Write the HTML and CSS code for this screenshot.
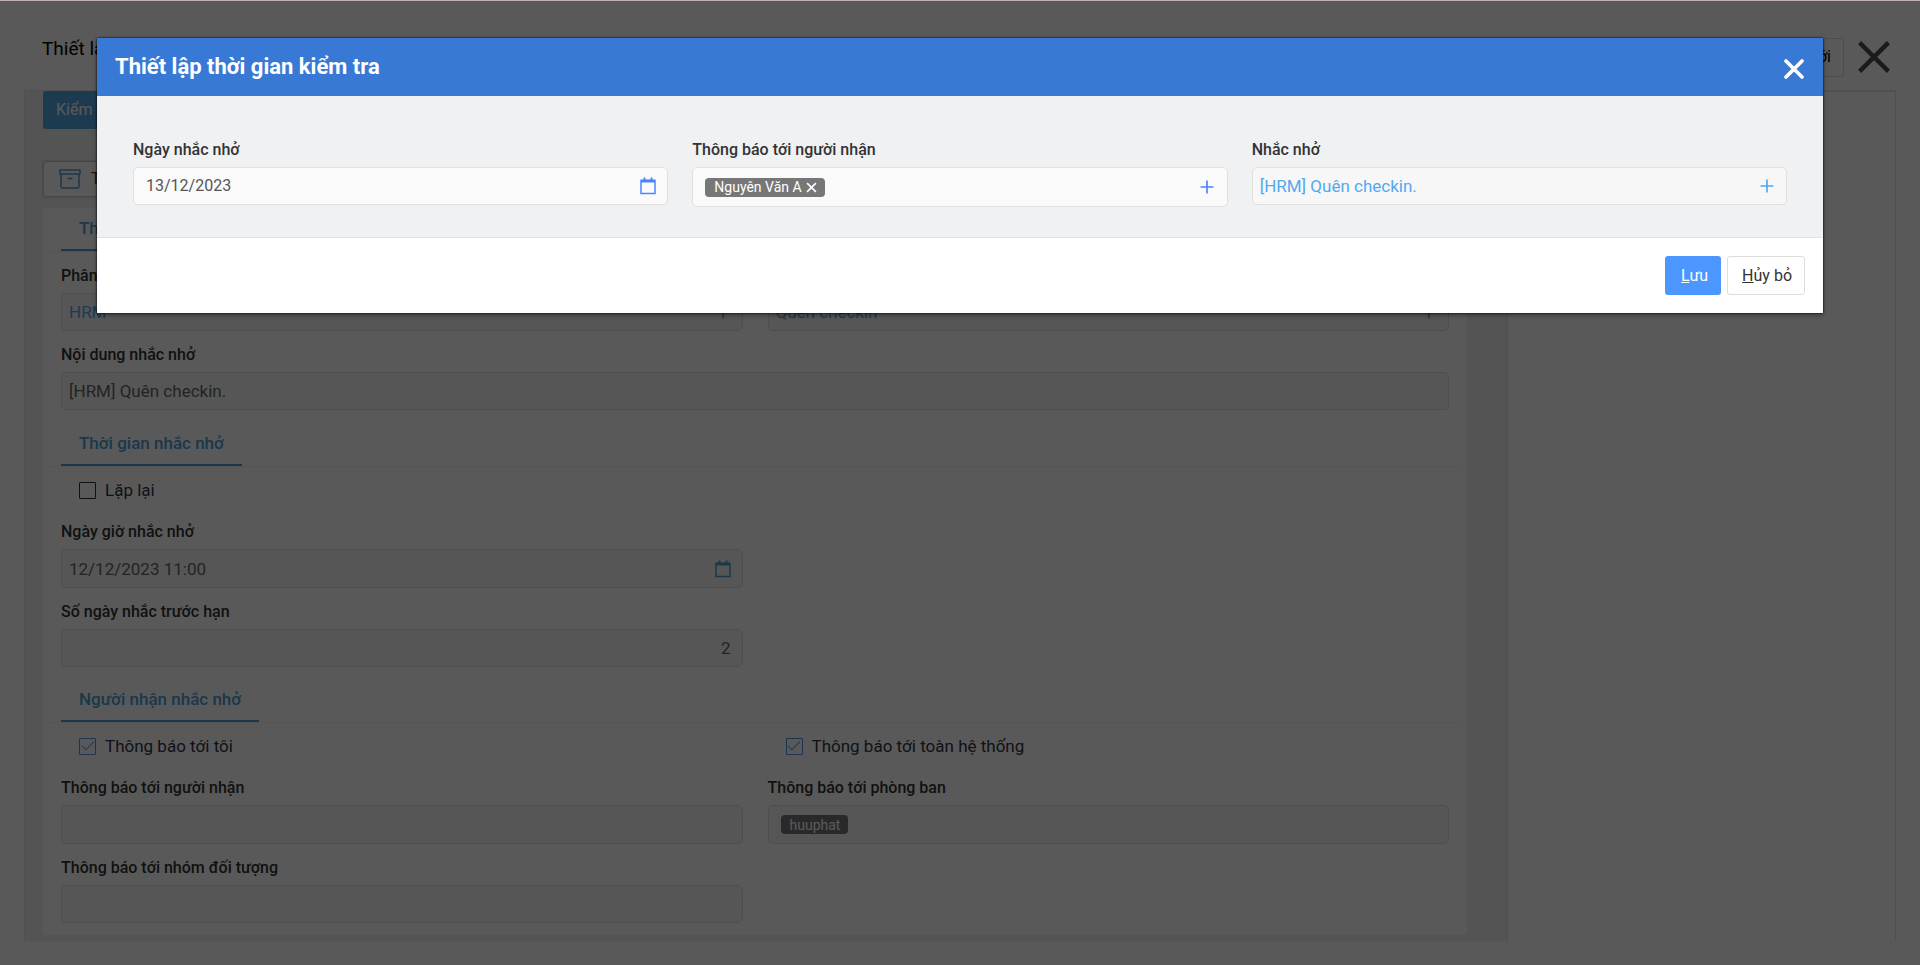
FILE: index.html
```html
<!DOCTYPE html>
<html lang="vi">
<head>
<meta charset="utf-8">
<title>Thiết lập nhắc nhở</title>
<link rel="stylesheet" href="styles.css">
</head>
<body>
<svg class="sprite" aria-hidden="true">
  <symbol id="plus" viewBox="0 0 14 14"><path d="M7 0.5v13M0.5 7h13" fill="none" stroke="currentColor" stroke-width="1.7"/></symbol>
  <symbol id="calendar" viewBox="0 0 16 18"><path d="M1 3.500h14v13H1z" fill="none" stroke="currentColor" stroke-width="1.500"/><path d="M1 2.500h14v3H1z" fill="currentColor"/><path d="M4.500 0.500v3M11.500 0.500v3" stroke="currentColor" stroke-width="1.800"/></symbol>
  <symbol id="cross" viewBox="0 0 20 20"><path d="M2 2l16 16M18 2L2 18" fill="none" stroke="currentColor" stroke-width="var(--cross)" stroke-linecap="var(--cap)"/></symbol>
  <symbol id="archive" viewBox="0 0 22 20"><path d="M1 1h20v4H1zM2 5v12.500a1.500 1.500 0 0 0 1.500 1.500h15a1.500 1.500 0 0 0 1.500-1.500V5M8.500 9.500h5" fill="none" stroke="currentColor" stroke-width="1.500" stroke-linejoin="round"/></symbol>
</svg>

<div class="page">
  <header class="topbar">
    <h1 class="page-title">Thiết lập nhắc nhở</h1>
    <div class="topbar-actions">
      <button class="btn btn-plain" type="button">Thêm mới</button>
      <button class="icon-btn page-close" type="button" aria-label="Đóng"><svg><use href="#cross"/></svg></button>
    </div>
  </header>
  <div class="workspace">
    <main class="main">
      <button class="btn btn-check" type="button">Kiểm tra</button>
      <div><button class="btn btn-template" type="button"><svg><use href="#archive"/></svg>Thiết lập</button></div>

      <section class="card">
        <div class="tabs"><h2 class="tab">Thông tin nhắc nhở</h2></div>
        <div class="grid">
          <div class="field">
            <label for="module">Phân hệ</label>
            <div class="control link"><input id="module" value="HRM"><svg class="plus"><use href="#plus"/></svg></div>
          </div>
          <div class="field">
            <label for="kind">Loại nhắc nhở</label>
            <div class="control link"><input id="kind" value="Quên checkin"><svg class="plus"><use href="#plus"/></svg></div>
          </div>
          <div class="field wide">
            <label for="content">Nội dung nhắc nhở</label>
            <div class="control"><input id="content" value="[HRM] Quên checkin."></div>
          </div>
        </div>
      </section>

      <section class="card">
        <div class="tabs"><h2 class="tab">Thời gian nhắc nhở</h2></div>
        <div class="grid">
          <label class="check wide"><input type="checkbox">Lặp lại</label>
          <div class="field">
            <label for="when">Ngày giờ nhắc nhở</label>
            <div class="control tall"><input id="when" value="12/12/2023 11:00"><svg class="cal"><use href="#calendar"/></svg></div>
          </div>
          <div class="field first">
            <label for="days">Số ngày nhắc trước hạn</label>
            <div class="control"><input id="days" class="number" value="2"></div>
          </div>
        </div>
      </section>

      <section class="card">
        <div class="tabs"><h2 class="tab">Người nhận nhắc nhở</h2></div>
        <div class="grid">
          <label class="check"><input type="checkbox" checked>Thông báo tới tôi</label>
          <label class="check"><input type="checkbox" checked>Thông báo tới toàn hệ thống</label>
          <div class="field">
            <label for="people">Thông báo tới người nhận</label>
            <div class="control tall"><input id="people"></div>
          </div>
          <div class="field">
            <label for="dept">Thông báo tới phòng ban</label>
            <div class="control tall tags"><span class="tag">huuphat</span><input id="dept"></div>
          </div>
          <div class="field">
            <label for="group">Thông báo tới nhóm đối tượng</label>
            <div class="control"><input id="group"></div>
          </div>
        </div>
      </section>
    </main>
    <aside class="side"></aside>
  </div>
</div>

<div class="overlay">
  <form class="modal" role="dialog" aria-labelledby="modal-title">
    <header class="modal-head">
      <h2 class="modal-title" id="modal-title">Thiết lập thời gian kiểm tra</h2>
      <button class="icon-btn modal-close" type="button" aria-label="Đóng"><svg><use href="#cross"/></svg></button>
    </header>
    <div class="modal-body">
      <div class="field">
        <label for="m-date">Ngày nhắc nhở</label>
        <div class="control light date"><input id="m-date" value="13/12/2023"><svg class="cal"><use href="#calendar"/></svg></div>
      </div>
      <div class="field">
        <label for="m-people">Thông báo tới người nhận</label>
        <div class="control light tags taller"><span class="tag">Nguyên Văn A<button class="icon-btn tag-x" type="button" aria-label="Xóa"><svg><use href="#cross"/></svg></button></span><input id="m-people"><svg class="plus"><use href="#plus"/></svg></div>
      </div>
      <div class="field">
        <label for="m-remind">Nhắc nhở</label>
        <div class="control link"><input id="m-remind" value="[HRM] Quên checkin."><svg class="plus"><use href="#plus"/></svg></div>
      </div>
    </div>
    <footer class="modal-foot">
      <button class="btn btn-save" type="submit"><span><u>L</u>ưu</span></button>
      <button class="btn btn-cancel" type="button"><span><u>H</u>ủy bỏ</span></button>
    </footer>
  </form>
</div>
</body>
</html>
```
FILE: styles.css
```css
* { box-sizing: border-box; }

body {
  margin: 0;
  background: #fff;
  color: #333;
  font: 16px/20px Roboto, sans-serif;
}

.sprite { position: absolute; width: 0; height: 0; }

h1, h2 { margin: 0; }

button, input { font: inherit; color: inherit; }

.page {
  display: flex;
  flex-direction: column;
  min-height: 100vh;
  padding: 0 24px 24px;
}

.topbar {
  display: flex;
  justify-content: space-between;
  align-items: center;
  height: 90px;
  padding: 0 4px 0 18px;
}

.page-title { color: #000; font-size: 19px; font-weight: 400; line-height: 24px; padding-top: 8px; }

.topbar-actions { display: flex; align-items: center; gap: 12px; padding-top: 24px; }

.btn {
  display: inline-flex;
  align-items: center;
  justify-content: center;
  height: 39px;
  border: 1px solid #ddd;
  border-radius: 3px;
  background: #fff;
}

.btn-plain { padding: 0 12px; color: #000; }

.icon-btn {
  --cap: butt;
  display: flex;
  padding: 0;
  border: 0;
  background: none;
}

.page-close { --cross: 2.4; color: #4d4d4d; }
.page-close svg { width: 36px; height: 36px; }

.workspace { display: flex; flex: 1; border-top: 1px solid #e4e4e4; }

.main {
  flex: 1;
  border-left: 1px solid #e4e4e4;
  background: #f1f1f1;
  padding: 0 40px 4px 18px;
}

.side {
  width: 389px;
  border: 1px solid #e4e4e4;
  border-width: 1px 1px 0;
}

.btn-check {
  height: 38px;
  padding: 0 13px;
  border: 0;
  background: #55a9e6;
  color: #fff;
}

.btn-template {
  gap: 10px;
  height: 36px;
  margin: 32px 0 11px;
  padding: 0 15px;
  border-color: #c8c8c8;
  color: #333;
  box-shadow: 0 0 3px rgba(0, 0, 0, .2);
}

.btn-template svg { width: 22px; height: 20px; color: #4f9fdb; }

.card { background: #fff; border-radius: 4px; padding: 0 6px 12px; }
.card:first-of-type { padding-bottom: 13px; }

.tabs { display: flex; height: 44px; padding: 0 12px; border-bottom: 1px solid #f1f1f1; }

.tab {
  height: 43px;
  padding: 10px 18px 0;
  border-bottom: 2px solid #4f9fdb;
  color: #4f9fdb;
  font-size: 17px;
  font-weight: 500;
  line-height: 20px;
}

.grid {
  display: grid;
  grid-template-columns: 1fr 1fr;
  column-gap: 25px;
  padding: 0 12px;
}

.wide { grid-column: 1 / -1; }
.first { grid-column: 1; }

.field { display: flex; flex-direction: column; padding-top: 14px; min-width: 0; }

.field > label {
  margin-bottom: 7px;
  color: #333;
  font-weight: 500;
}

.control {
  display: flex;
  align-items: center;
  height: 38px;
  padding: 0 11px 0 7px;
  border: 1px solid #e0e0e0;
  border-radius: 5px;
  background: #f7f7f7;
  color: #666;
  font-size: 17px;
}

.control.tall { height: 39px; }
.control.taller { height: 40px; }
.control.light { background: #fafafa; color: #555; }
.control.date { padding-left: 12px; font-size: 16px; }
.control.tags { padding: 0 13px 0 12px; }
.control.link { padding-right: 12px; color: #52a9f0; }

.control input {
  flex: 1;
  min-width: 0;
  padding: 0;
  border: 0;
  outline: 0;
  background: none;
}

.control svg { flex: none; color: #4a86ff; }
.control.link svg { color: #52a9f0; }
.page .control .cal { color: #4f9fdb; }
.page .number { text-align: right; }

.plus { width: 14px; height: 14px; }
.cal { width: 16px; height: 18px; }

.tag {
  display: inline-flex;
  align-items: center;
  gap: 4px;
  height: 19px;
  padding: 0 8px 0 9px;
  border-radius: 4px;
  background: #777;
  color: #fff;
  font-size: 14px;
}

.control .tag-x { --cross: 3; }
.control .tag-x svg { width: 11px; height: 11px; color: #fff; }

.check {
  display: flex;
  align-items: center;
  gap: 9px;
  padding: 13px 0 8px 18px;
  color: #333346;
  font-size: 17px;
  line-height: 20px;
}

.check input {
  appearance: none;
  display: grid;
  place-items: center;
  width: 17px;
  height: 17px;
  margin: 0;
  border: 1px solid #333;
  border-radius: 1px;
}

.check input:checked { border-color: #5595e8; }

.check input:checked::before {
  content: "";
  width: 11px;
  height: 5px;
  margin-bottom: 4px;
  border: solid #5595e8;
  border-width: 0 0 1px 1px;
  transform: rotate(-45deg);
}

.overlay {
  position: fixed;
  inset: 0;
  padding: 37px 97px;
  border-top: 1px solid #bbb0ac;
  background: rgba(0, 0, 0, .65);
}

.modal {
  background: #fff;
  box-shadow: 0 0 2px #000, 0 2px 5px rgba(0, 0, 0, .4);
}

.modal-head {
  display: flex;
  justify-content: space-between;
  align-items: center;
  height: 58px;
  padding: 0 19px 0 18px;
  background: #3979d6;
  color: #fff;
}

.modal-title { font-size: 22px; font-weight: 700; line-height: 24px; }

.modal-close { --cross: 3.6; --cap: round; padding-top: 4px; }
.modal-close svg { width: 20px; height: 20px; }

.modal-body {
  display: grid;
  grid-template-columns: repeat(3, 1fr);
  align-items: start;
  gap: 24px;
  padding: 30px 36px;
  border-bottom: 1px solid #e0e2e4;
  background: #f0f1f3;
}

.modal-foot {
  display: flex;
  justify-content: flex-end;
  gap: 6px;
  padding: 18px;
}

.btn-save { padding: 0 13px 0 16px; border: 0; background: #4b97ff; color: #fff; }
.btn-cancel { padding: 0 12px 0 14px; color: #333; }
```
